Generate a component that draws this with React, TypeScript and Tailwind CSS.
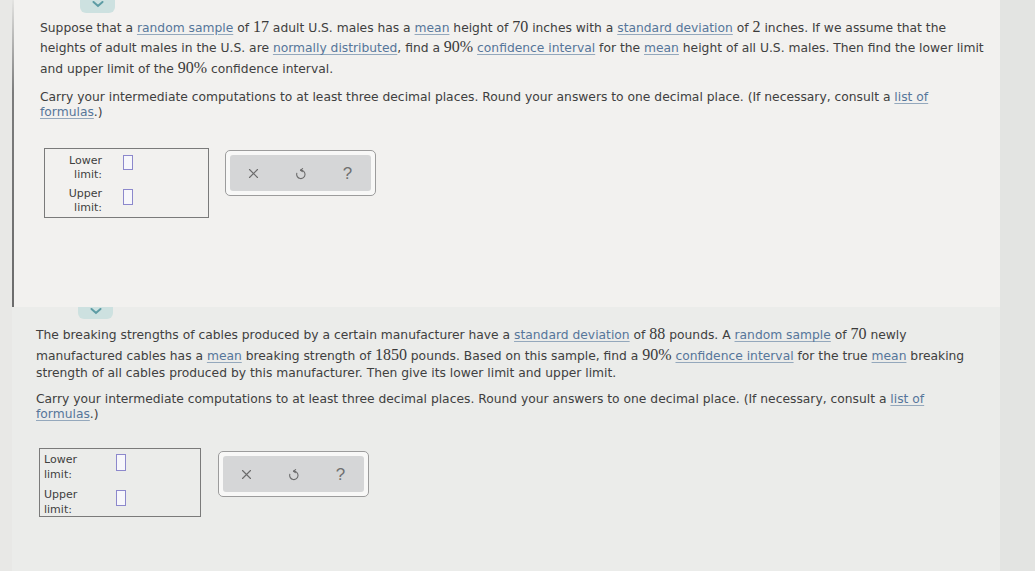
import type { ReactNode } from 'react';

const Num = ({ children }: { children: ReactNode }) => (
  <span className="font-['Liberation_Serif'] text-[16px] leading-none text-[#3a3a3a]">{children}</span>
);

const Term = ({ children }: { children: ReactNode }) => (
  <span className="text-[#56769a] underline decoration-[#94a8bc] underline-offset-2">{children}</span>
);

const Line = ({ h, children }: { h: string; children: ReactNode }) => (
  <div className={`${h} flex items-center whitespace-nowrap`}>
    <span>{children}</span>
  </div>
);

const UndoIcon = () => (
  <svg width="12" height="13" viewBox="0 0 12 13" fill="none" stroke="#6b6b6b" strokeWidth="1.1" strokeLinecap="round">
    <path d="M5.5 3.2 A4.2 4.2 0 1 1 1.8 6.2" />
    <path d="M5.5 3.2 L7.6 1.6 M5.5 3.2 L7.4 4.6" />
  </svg>
);

const Toolbar = () => (
  <div className="w-[151px] h-[46px] rounded-[5px] border border-[#9c9c9c] bg-[#f8f8f7] p-[4px]">
    <div className="h-full rounded-[3px] bg-[#d5d6d7] grid grid-cols-3 items-center justify-items-center text-[#6b6b6b]">
      <svg width="11" height="11" viewBox="0 0 11 11" stroke="#6b6b6b" strokeWidth="1.1" strokeLinecap="round">
        <path d="M1.5 1.5 L9.5 9.5 M9.5 1.5 L1.5 9.5" />
      </svg>
      <UndoIcon />
      <span className="font-['Liberation_Sans'] text-[17px] leading-none text-[#707070]">?</span>
    </div>
  </div>
);

const Blank = ({ h }: { h: string }) => <div className={`w-[10px] ${h} border border-[#8c88cc] bg-[#f7f7fb]`} />;

const Tab = ({ ml, h }: { ml: string; h: string }) => (
  <div className={`${ml} ${h} w-[35px] rounded-b-[6px] bg-[#cde1e0] flex items-start justify-center`}>
    <svg width="12" height="7" viewBox="0 0 12 7" className="mt-[1px]">
      <path d="M1.5 1 L6 5 L10.5 1" fill="none" stroke="#5d9ca4" strokeWidth="2" strokeLinecap="round" />
    </svg>
  </div>
);

export default function App() {
  return (
    <div className="w-[1035px] h-[571px] flex overflow-hidden bg-[#e3e4e2] font-['DejaVu_Sans'] text-[12.3px] text-[#404040]">
      <div className="w-[12px] bg-[#e8e8e6]" />
      <div className="w-[988px] flex flex-col">
        {/* first question */}
        <div className="h-[307px] flex bg-[#f2f1ef]">
          <div className="w-[2px] bg-linear-to-b from-[#e4e4e2] via-[#7c7c7c] via-30% to-[#6c6c6c]" />
          <div className="flex-1 flex flex-col">
            <Tab ml="ml-[66px]" h="h-[13px]" />
            <div className="mt-[5px] pl-[26px]">
              <Line h="h-[20px]">
                Suppose that a <Term>random sample</Term> of <Num>17</Num> adult U.S. males has a <Term>mean</Term> height of{' '}
                <Num>70</Num> inches with a <Term>standard deviation</Term> of <Num>2</Num> inches. If we assume that the
              </Line>
              <Line h="h-[21px]">
                heights of adult males in the U.S. are <Term>normally distributed</Term>, find a <Num>90%</Num>{' '}
                <Term>confidence interval</Term> for the <Term>mean</Term> height of all U.S. males. Then find the lower limit
              </Line>
              <Line h="h-[20px]">
                and upper limit of the <Num>90%</Num> confidence interval.
              </Line>
              <div className="mt-[11px]">
                <Line h="h-[15px]">
                  Carry your intermediate computations to at least three decimal places. Round your answers to one decimal place. (If
                  necessary, consult a <Term>list of</Term>
                </Line>
                <Line h="h-[15px]">
                  <Term>formulas</Term>.)
                </Line>
              </div>
            </div>
            <div className="mt-[28px] ml-[30px] flex items-start gap-[16px]">
              <div className="w-[165px] h-[70px] border border-[#7a7a7a] pt-[5px] pl-[17px] flex flex-col gap-[5px] text-[11px] leading-[14px]">
                <div className="flex items-start">
                  <div className="w-[40px] text-right">Lower<br />limit:</div>
                  <div className="ml-[21px] mt-[1px]"><Blank h="h-[15px]" /></div>
                </div>
                <div className="flex items-start">
                  <div className="w-[40px] text-right">Upper<br />limit:</div>
                  <div className="ml-[21px] mt-[2px]"><Blank h="h-[16px]" /></div>
                </div>
              </div>
              <div className="mt-[2px]">
                <Toolbar />
              </div>
            </div>
          </div>
        </div>
        {/* second question */}
        <div className="flex-1 flex flex-col bg-[#ebecea]">
          <Tab ml="ml-[66px]" h="h-[12px]" />
          <div className="mt-[6px] pl-[24px]">
            <Line h="h-[21px]">
              The breaking strengths of cables produced by a certain manufacturer have a <Term>standard deviation</Term> of{' '}
              <Num>88</Num> pounds. A <Term>random sample</Term> of <Num>70</Num> newly
            </Line>
            <Line h="h-[20px]">
              manufactured cables has a <Term>mean</Term> breaking strength of <Num>1850</Num> pounds. Based on this sample, find a{' '}
              <Num>90%</Num> <Term>confidence interval</Term> for the true <Term>mean</Term> breaking
            </Line>
            <Line h="h-[15px]">
              strength of all cables produced by this manufacturer. Then give its lower limit and upper limit.
            </Line>
            <div className="mt-[11px]">
              <Line h="h-[15px]">
                Carry your intermediate computations to at least three decimal places. Round your answers to one decimal place. (If
                necessary, consult a <Term>list of</Term>
              </Line>
              <Line h="h-[15px]">
                <Term>formulas</Term>.)
              </Line>
            </div>
          </div>
          <div className="mt-[26px] ml-[27px] flex items-start gap-[17px]">
            <div className="w-[162px] h-[69px] border border-[#7a7a7a] pt-[3px] pl-[4px] flex flex-col gap-[5px] text-[11px] leading-[15px]">
              <div className="flex items-start">
                <div className="w-[40px]">Lower<br />limit:</div>
                <div className="ml-[32px] mt-[2px]"><Blank h="h-[17px]" /></div>
              </div>
              <div className="flex items-start">
                <div className="w-[40px]">Upper<br />limit:</div>
                <div className="ml-[32px] mt-[3px]"><Blank h="h-[16px]" /></div>
              </div>
            </div>
            <div className="mt-[3px]">
              <Toolbar />
            </div>
          </div>
        </div>
      </div>
      <div className="flex-1 bg-[#e3e4e2]" />
    </div>
  );
}
